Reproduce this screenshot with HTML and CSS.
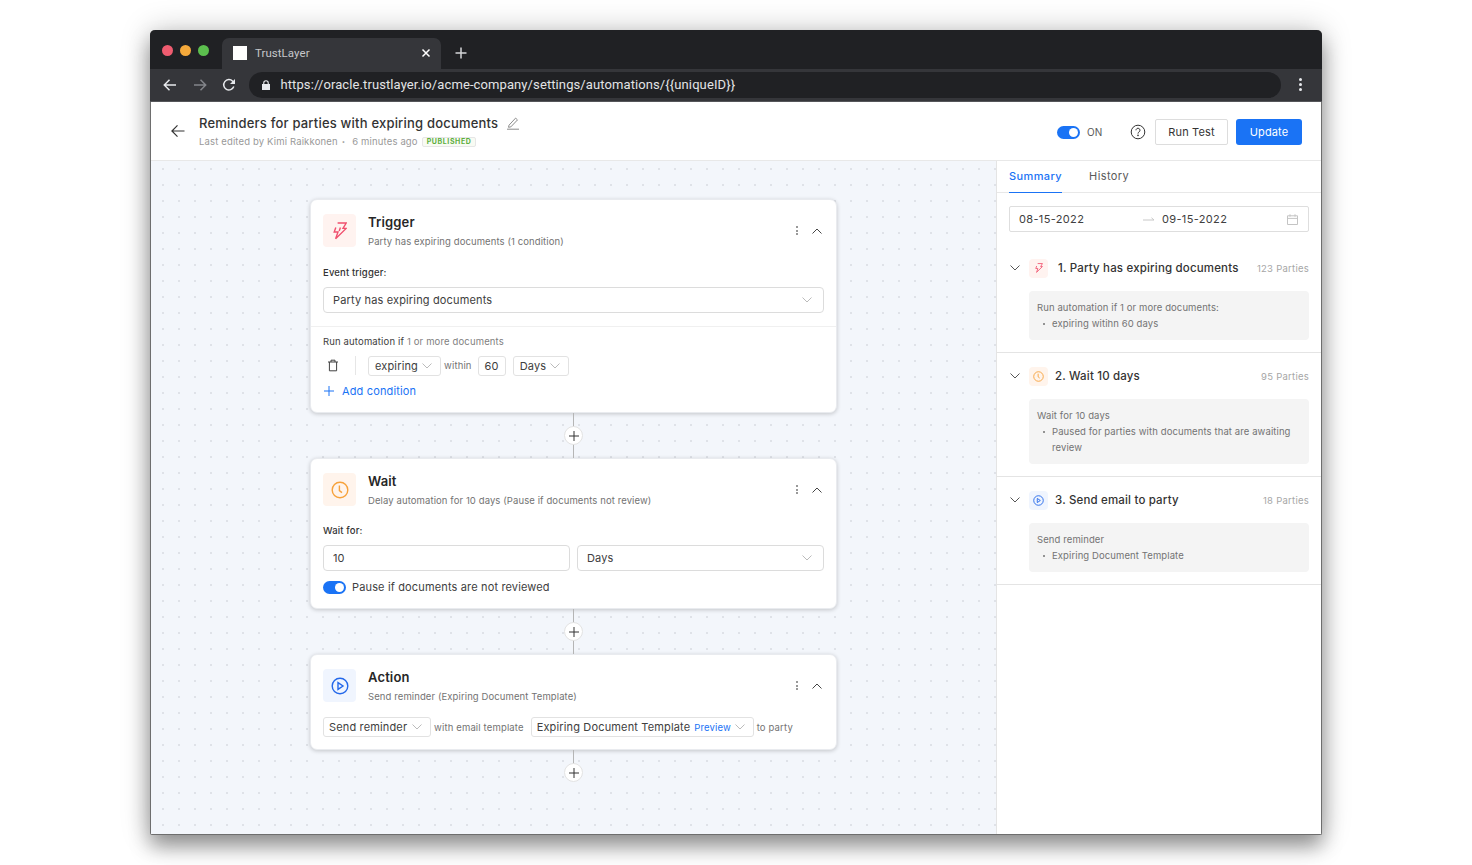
FILE: index.html
```html
<!DOCTYPE html>
<html lang="en">
<head>
  <meta charset="UTF-8" />
  <meta name="viewport" content="width=device-width, initial-scale=1.0"/>
  <title>TrustLayer</title>
  <link rel="stylesheet" href="styles.css">
</head>
<body>

<div class="window">

  <div class="tabstrip">
    <div class="lights">
      <span class="light red"></span>
      <span class="light amber"></span>
      <span class="light green"></span>
    </div>
    <div class="tab">
      <span class="favicon"></span>
      <span class="tab-title">TrustLayer</span>
      <svg class="tab-close" width="10" height="10" viewBox="0 0 10 10"><path d="M1.5 1.5l7 7M8.5 1.5l-7 7" /></svg>
    </div>
    <svg class="new-tab" width="12" height="12" viewBox="0 0 12 12"><path d="M6 .5v11M.5 6h11" /></svg>
  </div>

  <div class="toolbar">
    <svg class="nav" width="14" height="14" viewBox="0 0 14 14"><path d="M13 7H1.5M6.5 1.8L1.3 7l5.2 5.2" /></svg>
    <svg class="nav nav-off" width="14" height="14" viewBox="0 0 14 14"><path d="M1 7h11.5M7.5 1.8L12.7 7l-5.2 5.2" /></svg>
    <svg class="nav" width="14" height="14" viewBox="0 0 14 14"><path d="M11.8 8.6A5.2 5.2 0 1 1 10.7 3.2L12.6 5" /><path class="fill" d="M13 1v5H8z" /></svg>
    <div class="omnibox">
      <svg width="8" height="10" viewBox="0 0 8 10"><path class="lock" d="M1.2 4V3a2.8 2.8 0 0 1 5.6 0v1H8v6H0V4zM2.3 4h3.4V3a1.7 1.7 0 0 0-3.4 0z" /></svg>
      <span class="url">https://oracle.trustlayer.io/acme-company/settings/automations/{{uniqueID}}</span>
    </div>
    <div class="kebab-light"><i></i><i></i><i></i></div>
  </div>

  <header class="app-header">
    <svg class="back" width="14" height="14" viewBox="0 0 14 14"><path d="M13.5 7H1M6.5 1.3L.9 7l5.6 5.7" /></svg>
    <div class="heading">
      <div class="heading-top">
        <h1>Reminders for parties with expiring documents</h1>
        <svg class="pencil" width="14" height="14" viewBox="0 0 14 14"><path d="M3 9.2L9.6 2.1l1.9 1.8-6.7 7-2.3.4zM1 13.2h12" /></svg>
      </div>
      <div class="heading-sub">
        <span>Last edited by Kimi Raikkonen</span>
        <span class="sep">•</span>
        <span>6 minutes ago</span>
        <span class="badge">PUBLISHED</span>
      </div>
    </div>
    <div class="header-actions">
      <span class="toggle"></span>
      <span class="on-label">ON</span>
      <svg class="help" width="16" height="16" viewBox="0 0 16 16"><circle cx="8" cy="8" r="6.8" /><path d="M6 6.3a2 2 0 1 1 3.1 1.6c-.7.5-1.1.8-1.1 1.7" /><circle class="fill" cx="8" cy="11.4" r=".8" /></svg>
      <button class="btn">Run Test</button>
      <button class="btn btn-primary">Update</button>
    </div>
  </header>

  <div class="workspace">

    <main class="canvas">

      <section class="card card-trigger">
        <div class="card-head">
          <span class="step-icon red-bg">
            <svg width="14" height="18" viewBox="0 0 14 18"><path d="M4.6 1h8.6L10 6.4h3.2L2.6 16.8 5 10H1.2l1.6-4.6" /><path d="M7.4 5.6L6.2 9" /></svg>
          </span>
          <div class="card-titles">
            <h2>Trigger</h2>
            <p>Party has expiring documents (1 condition)</p>
          </div>
          <div class="kebab"><i></i><i></i><i></i></div>
          <svg class="caret-up" width="10" height="6" viewBox="0 0 10 6"><path d="M.5 5.5L5 1l4.5 4.5" /></svg>
        </div>
        <label class="field-label">Event trigger:</label>
        <div class="select">
          <span>Party has expiring documents</span>
          <svg class="chev" width="10" height="6" viewBox="0 0 10 6"><path d="M.5.5L5 5l4.5-4.5" /></svg>
        </div>
        <div class="card-divider"></div>
        <div class="run-if"><span class="dark">Run automation if</span> 1 or more documents</div>
        <div class="condition">
          <svg class="trash" width="12" height="13" viewBox="0 0 12 13"><path d="M1 3h10M4 3V1.2h4V3M2.4 3v8.8h7.2V3" /></svg>
          <span class="cond-rule"></span>
          <div class="mini-select w-73">expiring<svg class="chev" width="10" height="6" viewBox="0 0 10 6"><path d="M.5.5L5 5l4.5-4.5" /></svg></div>
          <span class="hint">within</span>
          <div class="mini-select num">60</div>
          <div class="mini-select w-56">Days<svg class="chev" width="10" height="6" viewBox="0 0 10 6"><path d="M.5.5L5 5l4.5-4.5" /></svg></div>
        </div>
        <div class="add-condition">
          <svg width="10" height="10" viewBox="0 0 10 10"><path d="M5 0v10M0 5h10" /></svg>
          <span>Add condition</span>
        </div>
      </section>

      <div class="connector"><span class="plus"><svg width="10" height="10" viewBox="0 0 10 10"><path d="M5 0v10M0 5h10" /></svg></span></div>

      <section class="card card-wait">
        <div class="card-head">
          <span class="step-icon amber-bg">
            <svg width="18" height="18" viewBox="0 0 18 18"><circle cx="9" cy="9" r="7.8" /><path d="M8.4 4.4v5.2l2.6 2" /></svg>
          </span>
          <div class="card-titles">
            <h2>Wait</h2>
            <p>Delay automation for 10 days (Pause if documents not review)</p>
          </div>
          <div class="kebab"><i></i><i></i><i></i></div>
          <svg class="caret-up" width="10" height="6" viewBox="0 0 10 6"><path d="M.5 5.5L5 1l4.5 4.5" /></svg>
        </div>
        <label class="field-label">Wait for:</label>
        <div class="wait-row">
          <div class="select"><span>10</span></div>
          <div class="select">
            <span>Days</span>
            <svg class="chev" width="10" height="6" viewBox="0 0 10 6"><path d="M.5.5L5 5l4.5-4.5" /></svg>
          </div>
        </div>
        <div class="pause-row">
          <span class="toggle"></span>
          <span>Pause if documents are not reviewed</span>
        </div>
      </section>

      <div class="connector"><span class="plus"><svg width="10" height="10" viewBox="0 0 10 10"><path d="M5 0v10M0 5h10" /></svg></span></div>

      <section class="card card-action">
        <div class="card-head">
          <span class="step-icon blue-bg">
            <svg width="18" height="18" viewBox="0 0 18 18"><circle cx="9" cy="9" r="7.8" /><path d="M7 5.6L12 9l-5 3.4z" /></svg>
          </span>
          <div class="card-titles">
            <h2>Action</h2>
            <p>Send reminder (Expiring Document Template)</p>
          </div>
          <div class="kebab"><i></i><i></i><i></i></div>
          <svg class="caret-up" width="10" height="6" viewBox="0 0 10 6"><path d="M.5 5.5L5 1l4.5 4.5" /></svg>
        </div>
        <div class="action-row">
          <div class="mini-select w-108">Send reminder<svg class="chev" width="10" height="6" viewBox="0 0 10 6"><path d="M.5.5L5 5l4.5-4.5" /></svg></div>
          <span class="hint">with email template</span>
          <div class="mini-select w-223">Expiring Document Template<a class="preview">Preview</a><svg class="chev" width="10" height="6" viewBox="0 0 10 6"><path d="M.5.5L5 5l4.5-4.5" /></svg></div>
          <span class="hint">to party</span>
        </div>
      </section>

      <div class="connector connector-end"><span class="plus"><svg width="10" height="10" viewBox="0 0 10 10"><path d="M5 0v10M0 5h10" /></svg></span></div>

    </main>

    <aside class="sidebar">
      <nav class="tabs">
        <a class="side-tab active">Summary</a>
        <a class="side-tab">History</a>
      </nav>

      <div class="date-range">
        <span class="date">08-15-2022</span>
        <svg class="date-arrow" width="12" height="6" viewBox="0 0 12 6"><path d="M0 4h11L8.5 1.8" /></svg>
        <span class="date">09-15-2022</span>
        <svg class="calendar" width="11" height="11" viewBox="0 0 11 11"><path d="M.5 1.8h10v8.7H.5zM.5 4.4h10M3 .3v2.4M8 .3v2.4" /></svg>
      </div>

      <div class="summary-item">
        <div class="summary-head">
          <svg class="chev-dark" width="10" height="6" viewBox="0 0 10 6"><path d="M.5.5L5 5l4.5-4.5" /></svg>
          <span class="mini-icon red-bg"><svg width="8" height="10" viewBox="0 0 14 18"><path d="M4.6 1h8.6L10 6.4h3.2L2.6 16.8 5 10H1.2l1.6-4.6" /></svg></span>
          <span class="summary-title first">1. Party has expiring documents</span>
          <span class="parties">123 Parties</span>
        </div>
        <div class="summary-box">
          <p>Run automation if 1 or more documents:</p>
          <ul><li>expiring witihn 60 days</li></ul>
        </div>
      </div>

      <div class="summary-item">
        <div class="summary-head">
          <svg class="chev-dark" width="10" height="6" viewBox="0 0 10 6"><path d="M.5.5L5 5l4.5-4.5" /></svg>
          <span class="mini-icon amber-bg"><svg width="11" height="11" viewBox="0 0 18 18"><circle cx="9" cy="9" r="7.8" /><path d="M8.4 4.4v5.2l2.6 2" /></svg></span>
          <span class="summary-title">2. Wait 10 days</span>
          <span class="parties">95 Parties</span>
        </div>
        <div class="summary-box">
          <p>Wait for 10 days</p>
          <ul><li>Paused for parties with documents that are awaiting review</li></ul>
        </div>
      </div>

      <div class="summary-item">
        <div class="summary-head">
          <svg class="chev-dark" width="10" height="6" viewBox="0 0 10 6"><path d="M.5.5L5 5l4.5-4.5" /></svg>
          <span class="mini-icon blue-bg"><svg width="11" height="11" viewBox="0 0 18 18"><circle cx="9" cy="9" r="7.8" /><path d="M7 5.6L12 9l-5 3.4z" /></svg></span>
          <span class="summary-title">3. Send email to party</span>
          <span class="parties">18 Parties</span>
        </div>
        <div class="summary-box">
          <p>Send reminder</p>
          <ul><li>Expiring Document Template</li></ul>
        </div>
      </div>
    </aside>

  </div>
</div>

</body>
</html>
```

FILE: styles.css
```css
* {
  box-sizing: border-box;
}

html, body {
  height: 100%;
}

body {
  margin: 0;
  padding: 30px 150px;
  background: #fff;
  font-family: Inter, "Liberation Sans", sans-serif;
  letter-spacing: 0.15px;
  color: #333;
  overflow: hidden;
}

svg {
  fill: none;
  stroke: currentColor;
  stroke-width: 1;
  flex: none;
}

svg .fill {
  fill: currentColor;
  stroke: none;
}

h1, h2, p, ul {
  margin: 0;
  padding: 0;
}

/* browser frame */
.window {
  width: 1172px;
  height: 805px;
  border: 1px solid #6e6e6e;
  border-top: 0;
  border-radius: 5px 5px 2px 2px;
  display: flex;
  flex-direction: column;
  box-shadow: 0 12px 20px rgba(0, 0, 0, 0.36), 0 0 30px rgba(0, 0, 0, 0.22);
  background: #fff;
}

.tabstrip {
  height: 39px;
  background: #202124;
  border-radius: 5px 5px 0 0;
  display: flex;
  margin: 0 -1px;
}

.lights {
  display: flex;
  gap: 7px;
  padding: 15px 0 0 12px;
  width: 72px;
}

.light {
  width: 11px;
  height: 11px;
  border-radius: 50%;
}

.red { background: #ef5c70; }
.amber { background: #f5a93b; }
.green { background: #5cbf4e; }

.tab {
  width: 219px;
  height: 31px;
  margin-top: 8px;
  background: #35363a;
  border-radius: 7px 7px 0 0;
  display: flex;
  align-items: center;
  padding: 0 10px 1px 11px;
  color: #c6c7ca;
  font-family: Roboto, sans-serif;
  font-size: 11.5px;
  letter-spacing: 0.05px;
}

.favicon {
  width: 14px;
  height: 14px;
  background: #fff;
  margin-right: 8px;
}

.tab-title {
  flex: 1;
}

.tab-close {
  color: #fff;
  stroke-width: 1.5;
}

.new-tab {
  color: #d4d5d7;
  stroke-width: 1.5;
  margin: 17px 0 0 14px;
}

.toolbar {
  height: 33px;
  background: #35363a;
  border-bottom: 1px solid #55565a;
  margin: 0 -1px;
  display: flex;
  align-items: center;
  padding: 0 0 1px 13px;
  gap: 15.5px;
  color: #e8eaed;
}

.nav {
  stroke-width: 1.5;
}

.nav-off {
  color: #83858a;
}

.omnibox {
  width: 1032px;
  height: 26px;
  margin-left: -3px;
  border-radius: 13px;
  background: #202124;
  display: flex;
  align-items: center;
  padding: 0 0 0 13px;
  gap: 11px;
}

.lock {
  fill: #e8eaed;
  stroke: none;
}

.url {
  font-family: Roboto, sans-serif;
  font-size: 13px;
  letter-spacing: 0.1px;
  color: #e3e4e6;
}

.kebab-light {
  display: flex;
  flex-direction: column;
  gap: 2px;
  margin-left: 3px;
}

.kebab-light i {
  width: 3px;
  height: 3px;
  border-radius: 50%;
  background: #e8eaed;
}

/* app header */
.app-header {
  height: 59px;
  flex: none;
  border-bottom: 1px solid #e8e8e8;
  display: flex;
  align-items: center;
  padding: 0 19px 0 20px;
}

.back {
  color: #333;
  stroke-width: 1.2;
  margin-right: 14px;
}

.heading {
  padding-bottom: 1px;
}

.heading-top {
  display: flex;
  align-items: center;
  gap: 8px;
}

h1 {
  font-size: 13px;
  font-weight: 500;
  line-height: 18px;
  letter-spacing: 0.2px;
  color: #333;
}

.pencil {
  color: #8c8c8c;
  margin-top: 1px;
}

.heading-sub {
  display: flex;
  align-items: center;
  font-size: 9.5px;
  line-height: 12px;
  color: #999;
  margin-top: 4px;
}

.sep {
  font-size: 6px;
  margin: 0 7px 0 4px;
}

.badge {
  margin: 1px 0 0 4px;
  height: 10px;
  padding: 0 4px;
  border: 1px solid #e6e6e6;
  border-radius: 2px;
  background: #f8fbf3;
  color: #5dae3e;
  font-size: 7px;
  line-height: 8px;
  font-weight: 700;
  letter-spacing: 0.6px;
}

.header-actions {
  margin-left: auto;
  padding-top: 2px;
  display: flex;
  align-items: center;
}

.toggle {
  width: 23px;
  height: 13px;
  border-radius: 7px;
  background: #1a73f5;
  position: relative;
  flex: none;
}

.toggle::after {
  content: "";
  position: absolute;
  right: 2px;
  top: 2px;
  width: 9px;
  height: 9px;
  border-radius: 50%;
  background: #fff;
}

.on-label {
  font-size: 10px;
  letter-spacing: 0;
  color: #595959;
  margin-left: 7px;
  width: 43px;
}

.help {
  color: #333;
  margin-right: 9px;
}

.btn {
  height: 26px;
  width: 73px;
  border: 1px solid #ddd;
  border-radius: 2px;
  background: #fff;
  font-family: inherit;
  font-size: 11px;
  color: #333;
  letter-spacing: 0.15px;
  padding: 0;
}

.btn-primary {
  width: 66px;
  margin-left: 8px;
  border: 0;
  border-radius: 3px;
  background: #1a73f5;
  color: #fff;
}

/* main area */
.workspace {
  flex: 1;
  display: flex;
  min-height: 0;
}

.canvas {
  flex: 1;
  padding-top: 38px;
  display: flex;
  flex-direction: column;
  align-items: center;
  background-color: #f3f6fb;
  background-image: radial-gradient(circle, #dfe2e8 1px, transparent 1.2px);
  background-size: 16px 16px;
  background-position: 4px 0;
}

.card {
  width: 527px;
  flex: none;
  background: #fff;
  border: 1px solid #e9ebef;
  border-radius: 7px;
  box-shadow: 0 1px 4px rgba(0, 0, 0, 0.2);
  padding: 14px 12px 0;
}

.card-trigger { height: 214px; }
.card-wait { height: 151px; }
.card-action { height: 96px; }

.card-head {
  display: flex;
  align-items: center;
  height: 33px;
}

.step-icon {
  width: 33px;
  height: 33px;
  border-radius: 4px;
  display: flex;
  align-items: center;
  justify-content: center;
  flex: none;
}

.step-icon svg {
  stroke-width: 1.4;
}

.red-bg { background: #fff3f0; color: #f0506e; }
.amber-bg { background: #fff4ec; color: #f7a23b; }
.blue-bg { background: #f0f5fe; color: #2468ea; }

.card-titles {
  flex: 1;
  margin-left: 12px;
}

h2 {
  font-size: 13px;
  line-height: 16px;
  font-weight: 600;
  color: #262626;
}

.card-titles p {
  font-size: 9.5px;
  line-height: 12px;
  margin-top: 6px;
  letter-spacing: 0.1px;
  color: #737373;
}

.kebab {
  display: flex;
  flex-direction: column;
  gap: 1.5px;
  margin-right: 14px;
}

.kebab i {
  width: 2px;
  height: 2px;
  background: #777;
  border-radius: 50%;
}

.caret-up {
  color: #444;
  margin-right: 2px;
}

.field-label {
  display: block;
  font-size: 9.5px;
  line-height: 12px;
  font-weight: 500;
  color: #333;
  margin-top: 19px;
}

.card-trigger .field-label {
  margin-top: 20px;
}

.select {
  height: 26px;
  margin-top: 8px;
  border: 1px solid #dcdcdc;
  border-radius: 4px;
  display: flex;
  align-items: center;
  justify-content: space-between;
  padding: 0 11px 0 9px;
  font-size: 11px;
  color: #404040;
  flex: 1;
}

.chev {
  color: #bbb;
}

.card-divider {
  height: 1px;
  background: #f0f0f0;
  margin: 13px -12px 0;
}

.run-if {
  font-size: 9.5px;
  line-height: 12px;
  color: #7f7f7f;
  margin-top: 9px;
}

.dark {
  color: #404040;
}

.condition {
  display: flex;
  align-items: center;
  margin-top: 8px;
  height: 19px;
}

.trash {
  color: #404040;
  margin-left: 4px;
}

.cond-rule {
  width: 1px;
  height: 19px;
  background: #e6e6e6;
  margin: 0 12px 0 16px;
}

.mini-select {
  height: 20px;
  border: 1px solid #e2e2e2;
  border-radius: 3px;
  display: flex;
  align-items: center;
  justify-content: space-between;
  padding: 0 8px 0 6px;
  font-size: 11px;
  color: #404040;
  flex: none;
  background: #fff;
}

.w-73 { width: 73px; }
.w-56 { width: 56px; margin-left: 7px; }
.w-108 { width: 108px; }
.w-223 { width: 223px; }
.num { width: 28px; justify-content: center; padding: 0; margin-left: 6px; }

.hint {
  font-size: 9.5px;
  color: #737373;
  margin-left: 3px;
  flex: none;
}

.add-condition {
  display: flex;
  align-items: center;
  gap: 8px;
  margin: 9px 0 0 1px;
  font-size: 11px;
  line-height: 14px;
  color: #1a73f5;
}

.connector {
  width: 1px;
  height: 45px;
  flex: none;
  background: #b5b5b5;
  position: relative;
}

.connector-end {
  height: 22px;
}

.plus {
  position: absolute;
  left: -9px;
  top: 13px;
  width: 19px;
  height: 19px;
  border-radius: 50%;
  background: #fff;
  border: 1px solid #e3e3e3;
  display: flex;
  align-items: center;
  justify-content: center;
  color: #333;
}

.wait-row {
  display: flex;
  gap: 7px;
}

.pause-row {
  display: flex;
  align-items: center;
  gap: 6px;
  margin-top: 9px;
  font-size: 11px;
  line-height: 14px;
  color: #404040;
}

.action-row {
  display: flex;
  align-items: center;
  margin-top: 15px;
}

.action-row .mini-select {
  padding-left: 5px;
}

.action-row .hint {
  margin: 0 7px 0 3px;
}

.preview {
  color: #1a73f5;
  font-size: 9.5px;
  margin-left: 4px;
  margin-right: auto;
  padding-top: 1px;
}

/* right column */
.sidebar {
  width: 325px;
  flex: none;
  border-left: 1px solid #e4e4e4;
  background: #fff;
}

.tabs {
  height: 32px;
  display: flex;
  gap: 27px;
  padding-left: 12px;
  border-bottom: 1px solid #e8e8e8;
}

.side-tab {
  height: 32px;
  line-height: 30px;
  font-size: 11px;
  letter-spacing: 0.4px;
  color: #595959;
}

.side-tab.active {
  color: #1a73f5;
  font-weight: 500;
  border-bottom: 1px solid #1a73f5;
}

.date-range {
  margin: 13px 12px 0;
  height: 26px;
  border: 1px solid #dedede;
  border-radius: 2px;
  display: flex;
  align-items: center;
  padding: 0 10px 0 9px;
  font-size: 11px;
  color: #404040;
}

.date {
  width: 124px;
  letter-spacing: 0.35px;
}

.date-arrow {
  color: #c8c8c8;
  margin-right: 7px;
}

.calendar {
  color: #c4c4c4;
  margin-left: auto;
}

.date-range + .summary-item {
  margin-top: 13px;
}

.summary-item {
  border-bottom: 1px solid #e4e4e4;
  padding: 0 12px 12px 13px;
}

.summary-head {
  display: flex;
  align-items: center;
  height: 46px;
}

.chev-dark {
  color: #555;
  flex: none;
}

.mini-icon {
  width: 19px;
  height: 19px;
  border-radius: 4px;
  margin-left: 9px;
  display: flex;
  align-items: center;
  justify-content: center;
  flex: none;
}

.mini-icon svg {
  stroke-width: 1.5;
}

.summary-title {
  font-size: 11.5px;
  font-weight: 500;
  letter-spacing: 0.17px;
  color: #333;
  margin-left: 7px;
}

.summary-title.first {
  margin-left: 10px;
}

.parties {
  margin-left: auto;
  font-size: 9.5px;
  letter-spacing: 0.25px;
  color: #a6a6a6;
}

.summary-box {
  margin-left: 19px;
  background: #f4f4f4;
  border-radius: 4px;
  padding: 9px 8px 8px;
  font-size: 9.5px;
  line-height: 16px;
  letter-spacing: 0.1px;
  color: #737373;
}

.summary-box ul {
  list-style: none;
}

.summary-box li {
  padding-left: 15px;
  position: relative;
}

.summary-box li::before {
  content: "";
  position: absolute;
  left: 6px;
  top: 7px;
  width: 2px;
  height: 2px;
  border-radius: 50%;
  background: #737373;
}
```
